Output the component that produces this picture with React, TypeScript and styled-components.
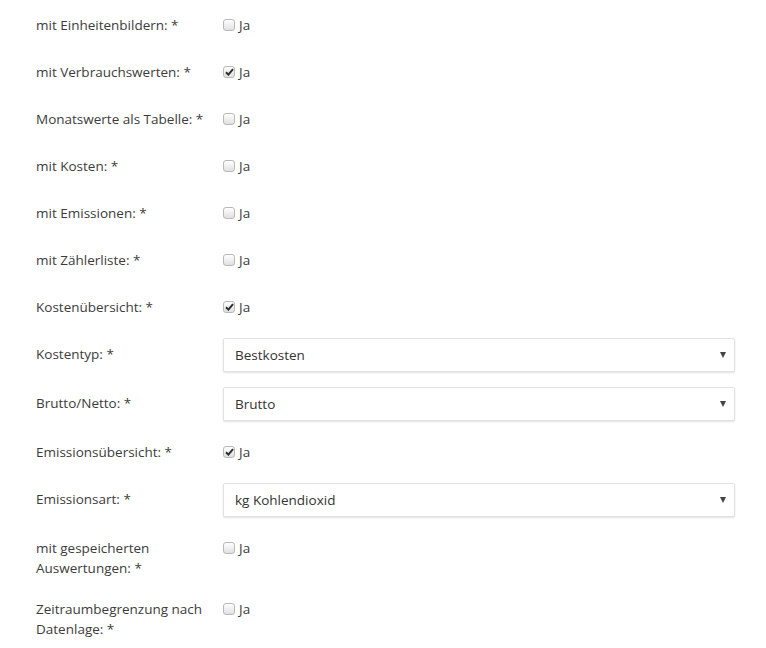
import React from 'react';
import styled, { createGlobalStyle } from 'styled-components';

const GlobalStyle = createGlobalStyle`
  body {
    margin: 8px;
    background: #ffffff;
    font-family: "Open Sans", "Liberation Sans", sans-serif;
    font-size: 13.5px;
    color: #3a3a3a;
  }
`;

const Form = styled.form`
  display: flex;
  flex-direction: column;
  gap: 15px;
  padding: 1px 23px 0 28px;
`;

const Row = styled.div`
  display: grid;
  grid-template-columns: 187px 1fr;
  align-items: start;
`;

const Label = styled.label`
  padding: 6px 13px 0 0;
  line-height: 20px;
  color: #3c3c3c;
`;

const CheckCell = styled.label`
  display: flex;
  align-items: center;
  gap: 4px;
  height: 32px;
  cursor: pointer;
  color: #3c3c3c;
`;

const Box = styled.span<{ $checked: boolean }>`
  width: 12px;
  height: 12px;
  box-sizing: border-box;
  border: 1px solid #b9b9b9;
  border-radius: 3px;
  background: linear-gradient(#ffffff, #e0e0e0);
  display: flex;
  align-items: center;
  justify-content: center;
  svg {
    display: ${(p) => (p.$checked ? 'block' : 'none')};
  }
`;

const SelectWrap = styled.div`
  position: relative;
  height: 34px;
`;

const Select = styled.select`
  appearance: none;
  width: 100%;
  height: 34px;
  box-sizing: border-box;
  border: 1px solid #e2e2e2;
  border-radius: 2px;
  background: #ffffff;
  box-shadow: 0 1px 2px rgba(0, 0, 0, 0.12);
  padding: 0 30px 0 11px;
  font-family: inherit;
  font-size: 13.5px;
  color: #333333;
  outline: none;
`;

const Arrow = styled.span`
  position: absolute;
  right: 9px;
  top: 14px;
  width: 0;
  height: 0;
  border-left: 3.5px solid transparent;
  border-right: 3.5px solid transparent;
  border-top: 6px solid #444444;
  pointer-events: none;
`;

type Field =
  | { kind: 'check'; label: string; checked: boolean }
  | { kind: 'select'; label: string; value: string };

const fields: Field[] = [
  { kind: 'check', label: 'mit Einheitenbildern: *', checked: false },
  { kind: 'check', label: 'mit Verbrauchswerten: *', checked: true },
  { kind: 'check', label: 'Monatswerte als Tabelle: *', checked: false },
  { kind: 'check', label: 'mit Kosten: *', checked: false },
  { kind: 'check', label: 'mit Emissionen: *', checked: false },
  { kind: 'check', label: 'mit Zählerliste: *', checked: false },
  { kind: 'check', label: 'Kostenübersicht: *', checked: true },
  { kind: 'select', label: 'Kostentyp: *', value: 'Bestkosten' },
  { kind: 'select', label: 'Brutto/Netto: *', value: 'Brutto' },
  { kind: 'check', label: 'Emissionsübersicht: *', checked: true },
  { kind: 'select', label: 'Emissionsart: *', value: 'kg Kohlendioxid' },
  { kind: 'check', label: 'mit gespeicherten Auswertungen: *', checked: false },
  { kind: 'check', label: 'Zeitraumbegrenzung nach Datenlage: *', checked: false }
];

function Check({ checked }: { checked: boolean }) {
  return (
    <CheckCell>
      <Box $checked={checked}>
        <svg width="9" height="8" viewBox="0 0 9 8">
          <path d="M1 4.2 L3.4 6.6 L8 1.2" fill="none" stroke="#2e2e2e" strokeWidth="2" />
        </svg>
      </Box>
      Ja
    </CheckCell>
  );
}

export default function App() {
  return (
    <>
      <GlobalStyle />
      <Form>
        {fields.map((f) => (
          <Row key={f.label}>
            <Label>{f.label}</Label>
            {f.kind === 'check' ? (
              <Check checked={f.checked} />
            ) : (
              <SelectWrap>
                <Select defaultValue={f.value}>
                  <option>{f.value}</option>
                </Select>
                <Arrow />
              </SelectWrap>
            )}
          </Row>
        ))}
      </Form>
    </>
  );
}
